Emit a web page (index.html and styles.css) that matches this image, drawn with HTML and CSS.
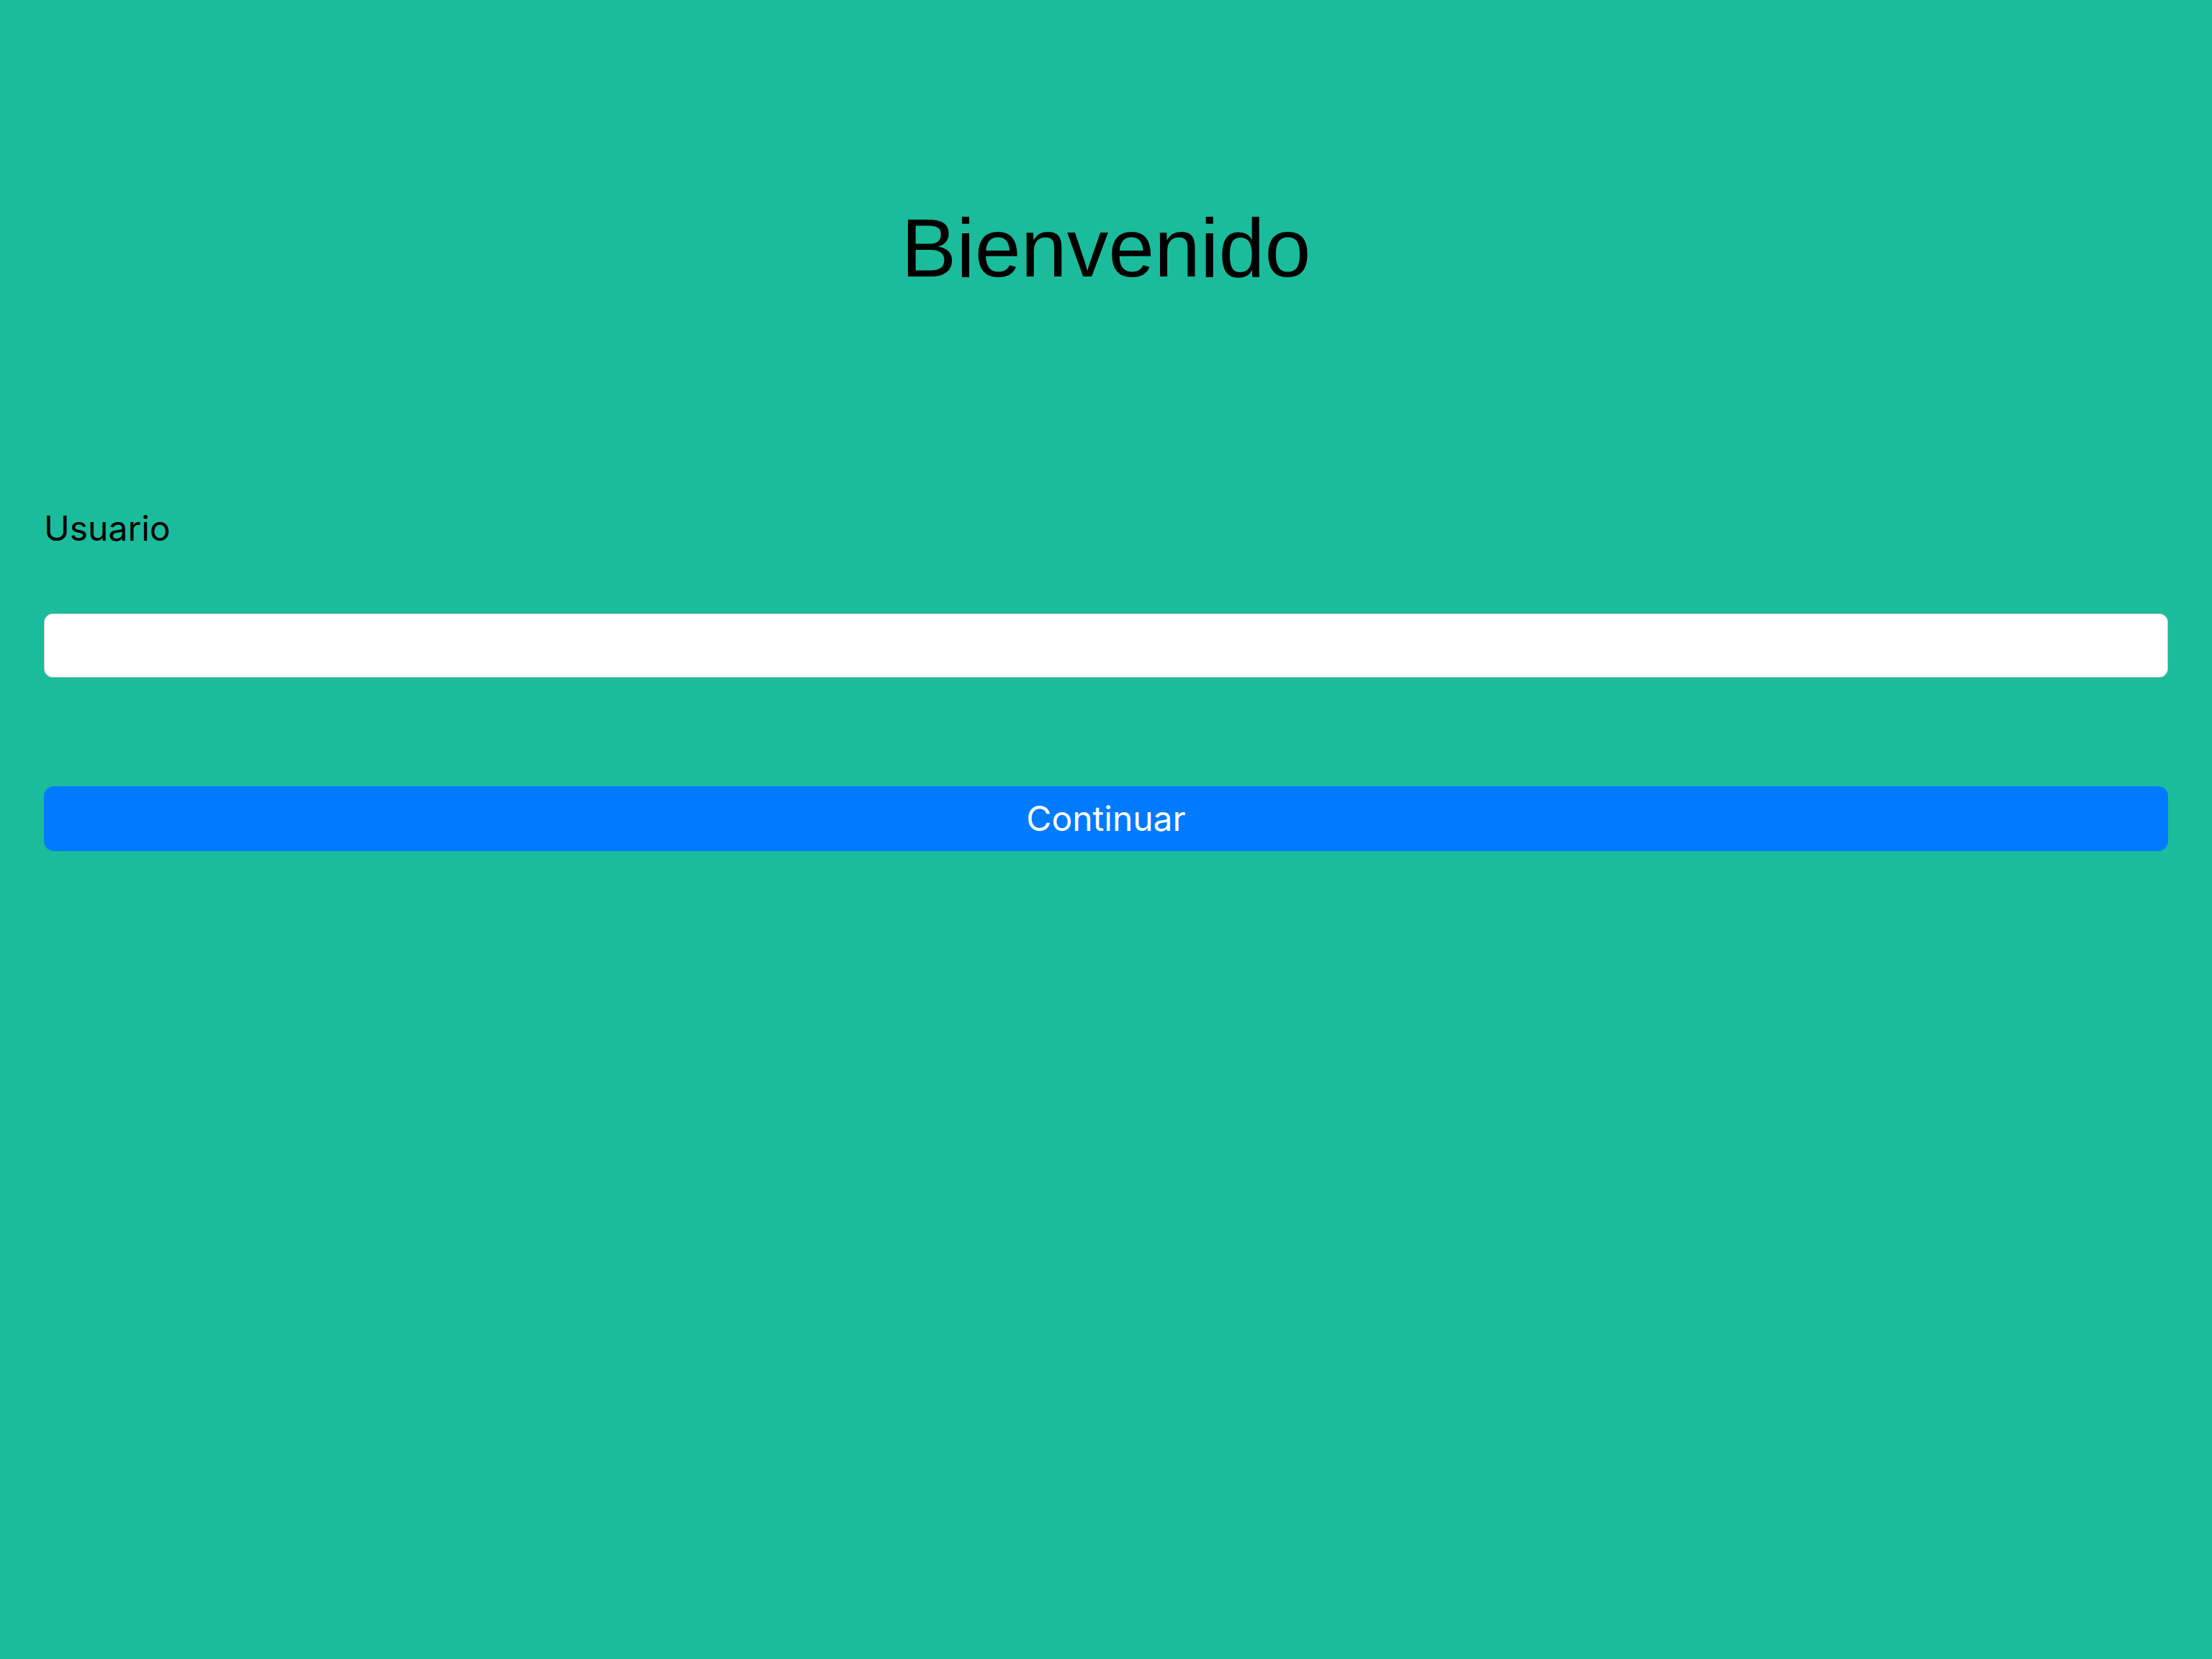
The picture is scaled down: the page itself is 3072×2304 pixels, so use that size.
FILE: index.html
```html
<!DOCTYPE html>
<html lang="es">
<head>
<meta charset="utf-8">
<title>Bienvenido</title>
<link rel="stylesheet" href="styles.css">
</head>
<body>
<main class="page">
  <h1 class="title">Bienvenido</h1>
  <form class="form">
    <label class="label" for="usuario">Usuario</label>
    <input class="field" id="usuario" type="text">
    <button class="btn" type="button">Continuar</button>
  </form>
</main>
</body>
</html>
```
FILE: styles.css
```css
html, body {
  margin: 0;
  padding: 0;
  background: #1abc9c;
}
body {
  min-height: 2304px;
}
.page {
  padding: 274px 61px 0 61px;
  display: flex;
  flex-direction: column;
}
.title {
  margin: 0;
  font-family: "Liberation Sans", Arial, sans-serif;
  font-weight: 400;
  font-size: 115px;
  line-height: 140px;
  color: #000;
  text-align: center;
}
.form {
  display: flex;
  flex-direction: column;
  margin-top: 290px;
}
.label {
  font-family: Inter, "Noto Sans", sans-serif;
  font-size: 48px;
  line-height: 60px;
  color: #000;
}
.field {
  margin: 88px 0 0 0;
  box-sizing: border-box;
  height: 89px;
  width: 100%;
  background: #fff;
  border: 1px solid #c7c7c7;
  border-radius: 12px;
  padding: 0 20px;
  font-family: Inter, sans-serif;
  font-size: 40px;
  outline: none;
}
.btn {
  margin-top: 151px;
  box-sizing: border-box;
  height: 90px;
  width: 100%;
  border: none;
  border-radius: 14px;
  background: #007aff;
  color: #fff;
  font-family: Inter, "Noto Sans", sans-serif;
  font-size: 48px;
  line-height: 60px;
  padding: 0;
  cursor: pointer;
}
```
